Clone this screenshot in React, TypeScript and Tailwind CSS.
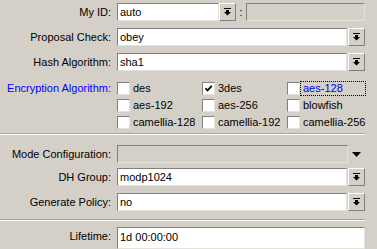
import React from "react";

const sunken = "border border-t-[#808080] border-l-[#808080] border-b-[#e4e2dc] border-r-[#e4e2dc]";

function DropIcon() {
  return (
    <svg width="7" height="8" viewBox="0 0 7 8" className="block">
      <rect x="0" y="0" width="7" height="1" fill="#000" />
      <path d="M2 2h3v2h2L3.5 7.5 0 4h2z" fill="#000" />
    </svg>
  );
}

function DropButton() {
  return (
    <div className="flex h-[18px] w-[17px] shrink-0 items-center justify-center border border-t-white border-l-white border-b-[#808080] border-r-[#808080] bg-[#d4d0c8]">
      <DropIcon />
    </div>
  );
}

function Row({ label, className = "", labelClass = "text-black", children }: { label: string; className?: string; labelClass?: string; children: React.ReactNode }) {
  return (
    <div className={`flex h-[18px] items-center ${className}`}>
      <div className={`w-[117px] shrink-0 pr-[6px] text-right ${labelClass}`}>{label}</div>
      <div className="flex h-full w-[248px] items-stretch">{children}</div>
    </div>
  );
}

function Field({ value, className = "" }: { value: string; className?: string }) {
  return (
    <div className={`flex h-full items-center bg-white pl-[2px] ${sunken} ${className}`}>{value}</div>
  );
}

function Check({ label, checked = false, focused = false }: { label: string; checked?: boolean; focused?: boolean }) {
  return (
    <div className="flex h-[17px] items-center">
      <div className={`flex h-[13px] w-[13px] shrink-0 items-center justify-center bg-white ${sunken}`}>
        {checked && (
          <svg width="9" height="9" viewBox="0 0 9 9">
            <path d="M1.5 4.2l2 2.2L7.8 1.8" stroke="#000" strokeWidth="1.7" fill="none" />
          </svg>
        )}
      </div>
      {focused ? (
        <div className="ml-0 flex h-[15px] flex-1 items-center border border-dotted border-black pl-[2px] text-[#0000ff]">{label}</div>
      ) : (
        <div className="ml-[3px]">{label}</div>
      )}
    </div>
  );
}

function Separator({ className = "" }: { className?: string }) {
  return <div className={`w-[365px] border-t border-b border-t-[#a9a69f] border-b-white ${className}`} />;
}

export default function App() {
  return (
    <div className="h-[249px] w-[377px] overflow-hidden bg-[#d4d0c8] pt-[3px] font-['Liberation_Sans',Arial,sans-serif] text-[11px] leading-none text-black">
      <Row label="My ID:">
        <Field value="auto" className="w-[102px]" />
        <DropButton />
        <div className="flex w-[10px] items-center justify-center">:</div>
        <div className={`flex-1 ${sunken}`} />
      </Row>
      <Row label="Proposal Check:" className="mt-[7px]">
        <Field value="obey" className="flex-1" />
        <div className="w-px" />
        <DropButton />
      </Row>
      <Row label="Hash Algorithm:" className="mt-[7px]">
        <Field value="sha1" className="flex-1" />
        <div className="w-px" />
        <DropButton />
      </Row>

      <div className="mt-[9px] flex">
        <div className="flex h-[17px] w-[117px] shrink-0 items-center justify-end pr-[6px] text-[#0000ff]">Encryption Algorithm:</div>
        <div className="grid w-[249px] grid-cols-[85px_85px_79px]">
          <Check label="des" />
          <Check label="3des" checked />
          <Check label="aes-128" focused />
          <Check label="aes-192" />
          <Check label="aes-256" />
          <Check label="blowfish" />
          <Check label="camellia-128" />
          <Check label="camellia-192" />
          <Check label="camellia-256" />
        </div>
      </div>

      <Separator className="mt-[2px]" />

      <Row label="Mode Configuration:" className="mt-[10px]">
        <div className={`w-[231px] ${sunken}`} />
        <div className="flex flex-1 items-center justify-center">
          <svg width="9" height="5" viewBox="0 0 9 5" className="block">
            <path d="M0 0h9L4.5 5z" fill="#000" />
          </svg>
        </div>
      </Row>
      <Row label="DH Group:" className="mt-[5px]">
        <Field value="modp1024" className="flex-1" />
        <div className="w-px" />
        <DropButton />
      </Row>
      <Row label="Generate Policy:" className="mt-[7px]">
        <Field value="no" className="flex-1" />
        <div className="w-px" />
        <DropButton />
      </Row>

      <Separator className="mt-[8px]" />

      <div className="mt-[6px] flex h-[22px] items-start">
        <div className="flex h-[18px] w-[117px] shrink-0 items-center justify-end pr-[6px]">Lifetime:</div>
        <div className={`flex h-full w-[248px] items-start bg-white pl-[2px] pt-[4px] ${sunken}`}>1d 00:00:00</div>
      </div>
    </div>
  );
}
